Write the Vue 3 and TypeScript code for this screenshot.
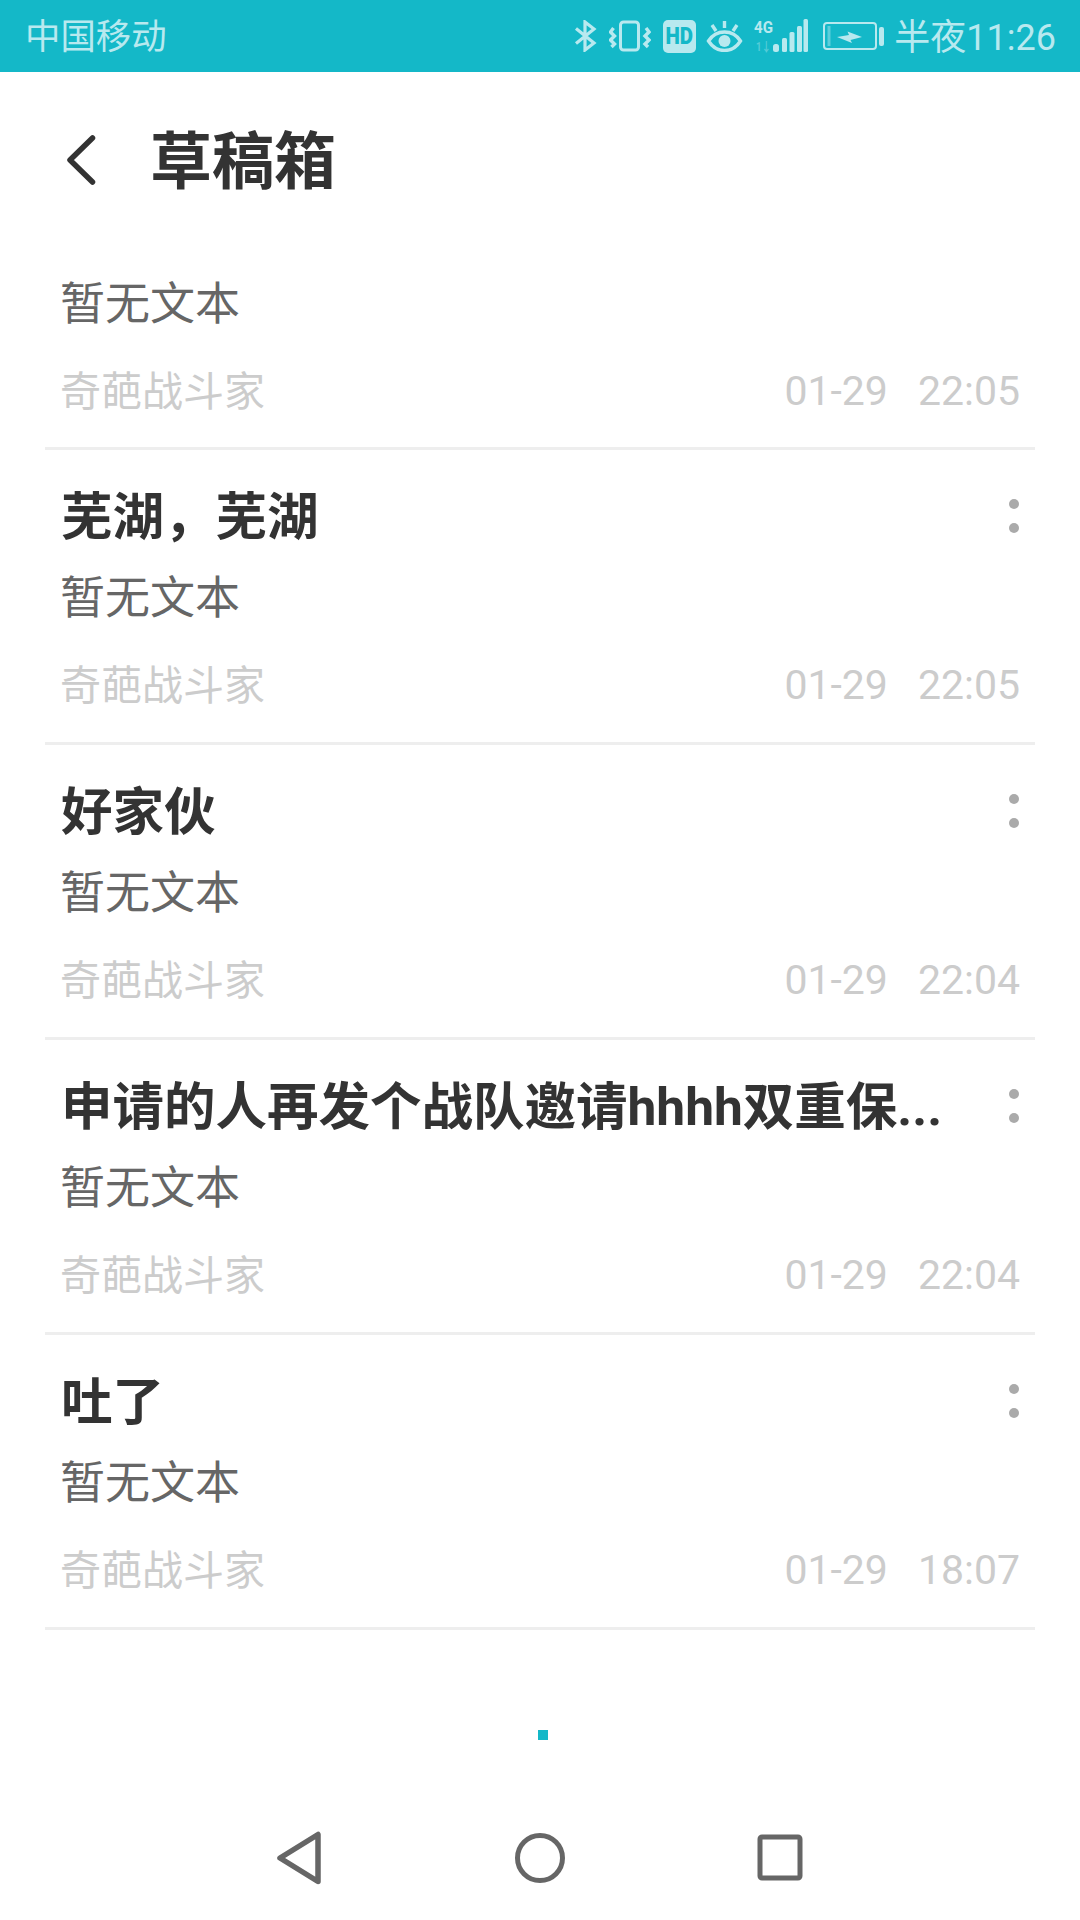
<script setup lang="ts">
interface Draft {
  title?: string;
  date: string;
  time: string;
}

const drafts: Draft[] = [
  { date: "01-29", time: "22:05" },
  { title: "芜湖，芜湖", date: "01-29", time: "22:05" },
  { title: "好家伙", date: "01-29", time: "22:04" },
  { title: "申请的人再发个战队邀请hhhh双重保...", date: "01-29", time: "22:04" },
  { title: "吐了", date: "01-29", time: "18:07" },
];
</script>

<template>
  <div class="page">
    <div class="status">
      <span class="carrier">中国移动</span>
      <div class="status-right">
        <svg class="ic" width="23" height="32" viewBox="0 0 23 32" fill="none" stroke="currentColor" stroke-width="3.2">
          <path d="M2 8.500 20 23 11 30V2L20 9 2 23.500" />
        </svg>
        <svg class="ic" width="42" height="32" viewBox="0 0 42 32" fill="none" stroke="currentColor" stroke-width="3">
          <rect x="11.500" y="2" width="18" height="28" rx="3" />
          <path stroke-width="3.400" d="M4.500 8 1.500 12 5.500 16 1.500 20 5.500 24 2.500 27" />
          <path stroke-width="3.400" d="M37 8 40 12 36 16 40 20 36 24 39 27" />
        </svg>
        <span class="hd"><span class="hd-text">HD</span></span>
        <svg class="ic eye" width="37" height="32" viewBox="0 0 37 32" fill="none" stroke="currentColor" stroke-width="3.400">
          <path d="M2.500 21C7 14 12 12 18.500 12S30 14 34.500 21C30 28 25 30.500 18.500 30.500S7 28 2.500 21Z" />
          <circle cx="18.500" cy="21" r="6" fill="currentColor" stroke="none" />
          <path d="M18.500 1V8M6 5 10 11M31 5 27 11" />
        </svg>
        <svg class="ic" width="54" height="42" viewBox="0 -4 54 42" fill="currentColor">
          <text x="0" y="14" class="net-text" textLength="19" lengthAdjust="spacingAndGlyphs">4G</text>
          <text x="2" y="32" class="net-sub" textLength="15" lengthAdjust="spacingAndGlyphs">1↓</text>
          <rect x="19" y="25" width="6" height="8" rx="2.500" />
          <rect x="28" y="19" width="5" height="14" rx="1.500" />
          <rect x="35.500" y="13" width="5" height="20" rx="1.500" />
          <rect x="43" y="7" width="5" height="26" rx="1.500" />
          <rect x="49.500" y="0" width="4.500" height="33" rx="1.500" />
        </svg>
        <svg class="ic battery" width="61" height="30" viewBox="0 0 61 30" fill="none" stroke="currentColor">
          <rect x="1" y="2" width="52" height="26" rx="3" stroke-width="2" />
          <rect x="4.500" y="5" width="3" height="20" fill="currentColor" stroke="none" opacity="0.45" />
          <path d="M14 16 26 14 24.500 10.500 39 16 27.500 19 29 22Z" fill="currentColor" stroke="none" />
          <rect x="56" y="6" width="5" height="19" rx="2" fill="currentColor" stroke="none" />
        </svg>
        <span class="clock">半夜11:26</span>
      </div>
    </div>

    <header class="header">
      <svg class="back" width="30" height="52" viewBox="0 0 30 52" fill="none" stroke="#333" stroke-width="5.500" stroke-linecap="round" stroke-linejoin="round">
        <path d="M25.500 4 3 26 25.500 48" />
      </svg>
      <h1 class="page-title">草稿箱</h1>
    </header>

    <ul class="list">
      <li v-for="(d, i) in drafts" :key="i" class="row" :class="{ 'row-untitled': !d.title }">
        <div v-if="d.title" class="row-head">
          <span class="title">{{ d.title }}</span>
          <span class="more"><i class="dot"></i><i class="dot"></i></span>
        </div>
        <p class="body">暂无文本</p>
        <div class="meta">
          <span class="author">奇葩战斗家</span>
          <span class="stamp"><span>{{ d.date }}</span><span>{{ d.time }}</span></span>
        </div>
      </li>
    </ul>

    <div class="loader"><i class="loader-dot"></i></div>

    <nav class="nav">
      <svg width="60" height="54" viewBox="0 0 60 54" fill="none" stroke="#666" stroke-width="5.500" stroke-linejoin="round">
        <path d="M11 27 49 3.500V50.500Z" />
      </svg>
      <svg width="60" height="54" viewBox="0 0 60 54" fill="none" stroke="#666" stroke-width="5">
        <circle cx="30" cy="27" r="22.500" />
      </svg>
      <svg width="60" height="54" viewBox="0 0 60 54" fill="none" stroke="#666" stroke-width="5">
        <rect x="9" y="6" width="40" height="41" rx="2" />
      </svg>
    </nav>
  </div>
</template>

<style>
html,
body {
  margin: 0;
  background: #fff;
}
</style>

<style scoped>
.page {
  width: 1080px;
  height: 1920px;
  overflow: hidden;
  background: #fff;
  font-family: Roboto, "Noto Sans CJK SC", sans-serif;
  display: flex;
  flex-direction: column;
}

.status {
  height: 72px;
  flex: none;
  background: #14b8c8;
  color: #b8e9ef;
  display: flex;
  align-items: center;
  justify-content: space-between;
  padding: 0 24px 0 25px;
  font-size: 36px;
}

.carrier {
  margin-top: 2px;
  font-size: 35.400px;
  line-height: 60px;
  white-space: nowrap;
}

.clock {
  margin-top: 3px;
  line-height: 60px;
  white-space: nowrap;
}

.status-right {
  display: flex;
  align-items: center;
  gap: 12px;
}

.ic {
  display: block;
  flex: none;
}

.eye {
  margin: 0 -1px 0 -1.500px;
}

.battery {
  margin: 0 -2px 0 3px;
}

.hd {
  width: 33px;
  height: 33px;
  border-radius: 5px;
  background: #b8e9ef;
  color: #14b8c8;
  display: flex;
  align-items: center;
  justify-content: center;
}

.hd-text {
  display: block;
  font-size: 24px;
  font-weight: 900;
  line-height: 24px;
  transform: scaleX(0.85);
}

.net-text {
  font-size: 17px;
  font-weight: 700;
}

.net-sub {
  font-size: 13px;
  font-weight: 700;
  opacity: 0.4;
}

.header {
  height: 176px;
  flex: none;
  display: flex;
  align-items: center;
  padding-left: 67px;
  box-sizing: border-box;
}

.back {
  display: block;
  flex: none;
}

.page-title {
  margin: 5px 0 0 53px;
  font-size: 62px;
  font-weight: 700;
  color: #333;
  line-height: 76px;
}

.list {
  list-style: none;
  margin: 0 45px;
  padding: 0;
}

.row {
  height: 295px;
  box-sizing: border-box;
  padding: 38px 16px 0 15px;
  border-bottom: 3px solid #eeeeee;
}

.row-untitled {
  height: 202px;
  padding-top: 22px;
}

.row-head {
  height: 60px;
  display: flex;
  align-items: center;
  justify-content: space-between;
}

.title {
  margin-left: 1px;
  font-size: 51.500px;
  font-weight: 700;
  color: #333;
  line-height: 60px;
  white-space: nowrap;
}

.more {
  display: flex;
  flex-direction: column;
  gap: 14px;
  margin-top: -4px;
}

.dot {
  display: block;
  width: 10px;
  height: 10px;
  border-radius: 50%;
  background: #aaa;
}

.body {
  margin: 16px 0 0;
  font-size: 45px;
  line-height: 70px;
  color: #666;
}

.row-untitled .body {
  margin-top: 0;
}

.meta {
  margin-top: 25px;
  display: flex;
  align-items: flex-start;
  justify-content: space-between;
  font-size: 41px;
  color: #ccc;
}

.author {
  line-height: 55px;
}

.stamp {
  display: flex;
  gap: 30px;
  margin-right: -1px;
  line-height: 53px;
}

.loader {
  flex: none;
  display: flex;
  justify-content: center;
  padding: 100px 0 0 6px;
}

.loader-dot {
  display: block;
  width: 10px;
  height: 10px;
  background: #14b8c8;
}

.nav {
  flex: none;
  display: flex;
  justify-content: center;
  gap: 181px;
  margin-top: 91px;
}

.nav svg {
  display: block;
}
</style>
